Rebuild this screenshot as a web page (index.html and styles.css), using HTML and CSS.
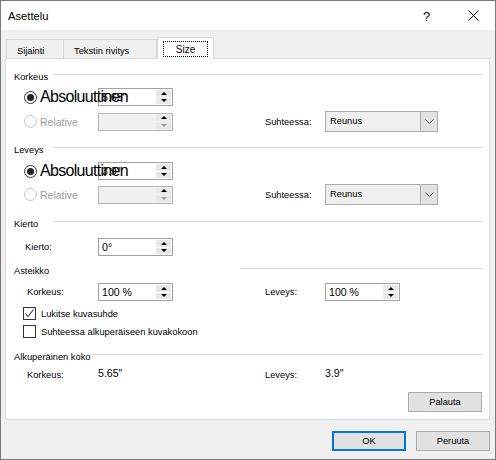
FILE: index.html
```html
<!DOCTYPE html>
<html>
<head>
<meta charset="utf-8">
<link rel="stylesheet" href="styles.css">
</head>
<body>
<div class="window">
  <div class="titlebar">
    <span class="title">Asettelu</span>
    <span class="help">?</span>
    <span class="close"><svg width="11" height="11" viewBox="0 0 11 11"><path d="M0.5 0.5 L10.5 10.5 M10.5 0.5 L0.5 10.5" stroke="#000" stroke-width="1" fill="none"/></svg></span>
  </div>
  <div class="tabs">
    <div class="tab tab1">Sijainti</div>
    <div class="tab tab2">Tekstin rivitys</div>
    <div class="tab active"><span class="focus">Size</span></div>
  </div>
  <div class="panel">
    <div class="ghead gh-korkeus"><span class="glabel">Korkeus</span><span class="gline"></span></div>
    <div class="row r-a1">
      <div class="lcell"><span class="radio checked"></span><span class="big">Absoluuttinen</span></div>
      <div class="spin"><span class="val">5.65"</span><span class="btns"><span class="up"></span><span class="dn"></span></span></div>
    </div>
    <div class="row tall r-b1">
      <div class="lcell"><span class="radio disabled"></span><span class="dis">Relative</span></div>
      <div class="spin off"><span class="val"></span><span class="btns"><span class="up"></span><span class="dn"></span></span></div>
      <span class="rlabel">Suhteessa:</span>
      <div class="combo"><span class="ctext">Reunus</span><span class="carrow"><svg width="9" height="5" viewBox="0 0 9 5"><path d="M0.5 0.5 L4.5 4.5 L8.5 0.5" stroke="#555" fill="none"/></svg></span></div>
    </div>

    <div class="ghead gh-leveys"><span class="glabel">Leveys</span><span class="gline"></span></div>
    <div class="row r-a2">
      <div class="lcell"><span class="radio checked"></span><span class="big">Absoluuttinen</span></div>
      <div class="spin"><span class="val">3.9"</span><span class="btns"><span class="up"></span><span class="dn"></span></span></div>
    </div>
    <div class="row tall r-b2">
      <div class="lcell"><span class="radio disabled"></span><span class="dis">Relative</span></div>
      <div class="spin off"><span class="val"></span><span class="btns"><span class="up"></span><span class="dn"></span></span></div>
      <span class="rlabel">Suhteessa:</span>
      <div class="combo"><span class="ctext">Reunus</span><span class="carrow"><svg width="9" height="5" viewBox="0 0 9 5"><path d="M0.5 0.5 L4.5 4.5 L8.5 0.5" stroke="#555" fill="none"/></svg></span></div>
    </div>

    <div class="ghead gh-kierto"><span class="glabel">Kierto</span><span class="gline"></span></div>
    <div class="row r-kierto">
      <div class="lcell"><span class="plabel p1">Kierto:</span></div>
      <div class="spin"><span class="val">0°</span><span class="btns"><span class="up"></span><span class="dn"></span></span></div>
    </div>

    <div class="ghead gh-asteikko"><span class="glabel">Asteikko</span><span class="gline"></span></div>
    <div class="row r-scale">
      <div class="lcell"><span class="plabel p3">Korkeus:</span></div>
      <div class="spin"><span class="val">100 %</span><span class="btns"><span class="up"></span><span class="dn"></span></span></div>
      <span class="rlabel p3">Leveys:</span>
      <div class="spin"><span class="val">100 %</span><span class="btns"><span class="up"></span><span class="dn"></span></span></div>
    </div>
    <div class="check-row c1">
      <span class="cbox"><svg width="11" height="11" viewBox="0 0 11 11"><path d="M1.5 5.5 L4 8.5 L9.5 1.5" stroke="#333" stroke-width="1.1" fill="none"/></svg></span>
      <span class="ctext2">Lukitse kuvasuhde</span>
    </div>
    <div class="check-row c2">
      <span class="cbox"></span>
      <span class="ctext2">Suhteessa alkuperäiseen kuvakokoon</span>
    </div>

    <div class="ghead gh-alk"><span class="glabel">Alkuperäinen koko</span><span class="gline"></span></div>
    <div class="row orig">
      <div class="lcell"><span class="plabel p3">Korkeus:</span></div>
      <span class="oval">5.65"</span>
      <span class="rlabel p3">Leveys:</span>
      <span class="oval">3.9"</span>
    </div>
    <div class="reset-row"><button class="btn reset">Palauta</button></div>
  </div>
  <div class="footer">
    <button class="btn ok">OK</button>
    <button class="btn">Peruuta</button>
  </div>
</div>
</body>
</html>
```

FILE: styles.css
```css
* { box-sizing: border-box; }
html, body { margin: 0; padding: 0; background: #fff; }
body { font-family: "Liberation Sans", Arial, sans-serif; font-size: 9.3px; color: #000; }

.window {
  width: 496px; height: 460px;
  border: 1px solid #7a7a7a;
  background: #f0f0f0;
  display: flex; flex-direction: column;
}

.titlebar {
  height: 29px; flex: none;
  background: #fff;
  display: flex; align-items: center;
  padding-left: 7px;
}
.title { font-size: 11.2px; flex: 1; margin-top: 1px; }
.help { font-size: 13px; width: 14px; margin-right: 31px; margin-top: 1px; }
.close { width: 11px; height: 11px; margin-right: 16px; display: flex; }

.tabs {
  height: 28px; flex: none;
  display: flex; align-items: flex-end;
  padding-left: 5px;
  position: relative; z-index: 1;
}
.tab {
  height: 19px;
  border: 1px solid #d9d9d9; border-bottom: none;
  background: #f0f0f0;
  display: flex; align-items: center;
  padding-left: 10px; padding-top: 4px;
}
.tab1 { width: 58px; }
.tab2 { width: 93px; border-left: none; }
.active {
  width: 57px; height: 22px;
  margin-bottom: -1px;
  background: #fff;
  border-left: 1px solid #d9d9d9;
  padding-left: 5px; padding-top: 0;
  font-size: 10px;
}
.focus {
  width: 45px; height: 16px;
  border: 1px dotted #000;
  display: flex; align-items: center; justify-content: center;
  margin-top: 1px;
}

.panel {
  margin-left: 4px; width: 485px; height: 362px; flex: none;
  background: #fff;
  border: 1px solid #d9d9d9;
}

.ghead {
  display: flex; align-items: flex-start;
  height: 14px;
  padding-left: 8px; padding-right: 6px;
}
.glabel { line-height: 14px; min-width: 39px; white-space: nowrap; }
.gline { flex: 1; border-top: 1px solid #dcdcdc; margin-top: 4px; }
.gh-asteikko .gline { margin-left: 187px; }
.gh-korkeus { margin-top: 11px; }
.gh-leveys { margin-top: 11px; }
.gh-kierto { margin-top: 12px; }
.gh-asteikko { margin-top: 8px; }
.gh-alk { margin-top: 12px; }

.row {
  display: flex; align-items: center;
  height: 18px;
  padding-left: 18px;
}
.row.tall { height: 21px; }
.r-a1 { margin-top: 4px; }
.r-b1 { margin-top: 5px; }
.r-a2 { margin-top: 5px; }
.r-b2 { margin-top: 4px; }
.r-kierto { margin-top: 7px; }
.r-scale { margin-top: 5px; }
.orig { margin-top: 4px; height: 14px; }

.lcell { width: 74px; flex: none; display: flex; align-items: center; white-space: nowrap; }
.radio {
  width: 13px; height: 13px; flex: none;
  border-radius: 50%;
  border: 1px solid #333;
  background: #fff;
  margin-right: 3px;
  display: flex; align-items: center; justify-content: center;
}
.radio.checked::after {
  content: ""; width: 7px; height: 7px; border-radius: 50%; background: #222;
}
.radio.disabled { border-color: #c6c6c6; }
.big { font-size: 16px; letter-spacing: -0.7px; position: relative; }
.dis { color: #9d9d9d; font-size: 10.5px; }
.plabel.p1 { padding-left: 1px; }
.plabel.p3 { padding-left: 3px; }

.spin {
  width: 75px; height: 18px; flex: none;
  border: 1px solid #a2a2a2;
  background: #fff;
  display: flex;
}
.spin.off { background: #f0f0f0; border-color: #b5b5b5; }
.val { flex: 1; font-size: 10.6px; padding-left: 3px; line-height: 16px; }
.btns { width: 16px; display: flex; flex-direction: column; padding: 1px 1px 1px 0; gap: 1px; }
.btns span {
  flex: 1; background: #e8e8e8;
  display: flex; align-items: center; justify-content: center;
}
.btns .up::after {
  content: ""; border-left: 3px solid transparent; border-right: 3px solid transparent;
  border-bottom: 3px solid #000;
}
.btns .dn::after {
  content: ""; border-left: 3px solid transparent; border-right: 3px solid transparent;
  border-top: 3px solid #000;
}
.off .btns .dn::after { border-top-color: #9d9d9d; }

.rlabel { margin-left: 92px; width: 60px; flex: none; }
.combo {
  width: 113px; height: 21px; flex: none;
  border: 1px solid #acacac;
  background: #efefef;
  display: flex;
}
.ctext { flex: 1; padding-left: 4px; line-height: 19px; }
.carrow {
  width: 17px; border-left: 1px solid #acacac; background: #e2e2e2;
  display: flex; align-items: center; justify-content: center;
}

.check-row { display: flex; align-items: center; height: 13px; padding-left: 17px; }
.c1 { margin-top: 6px; }
.c2 { margin-top: 5px; }
.cbox {
  width: 13px; height: 13px; flex: none;
  border: 1px solid #333; background: #fff;
  display: flex; align-items: center; justify-content: center;
  margin-right: 5px;
}

.oval { width: 75px; flex: none; font-size: 10.6px; margin-top: -4px; }

.reset-row { display: flex; justify-content: flex-end; padding-right: 7px; margin-top: 10px; }

.btn {
  font-family: "Liberation Sans", Arial, sans-serif; font-size: 9.3px; color: #000;
  width: 74px; height: 20px;
  background: #e1e1e1;
  border: 1px solid #adadad;
  padding: 0;
}
.footer {
  display: flex; justify-content: flex-end; gap: 10px;
  padding-top: 11px; padding-right: 5px;
}
.btn.ok { border: 2px solid #0078d7; }
```
